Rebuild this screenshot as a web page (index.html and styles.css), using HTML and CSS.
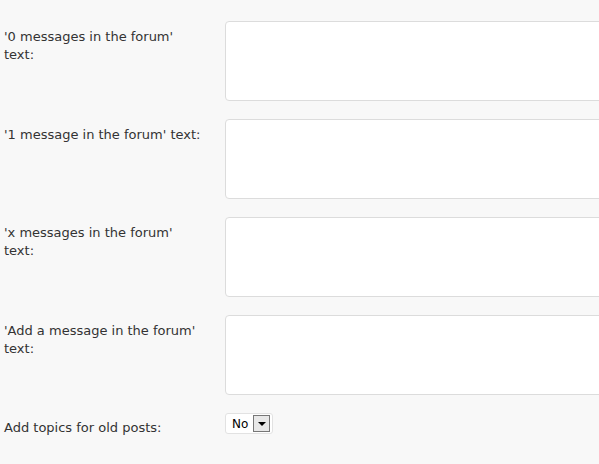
FILE: index.html
```html
<!DOCTYPE html>
<html lang="en">
<head>
    <meta charset="UTF-8">
    <title>Forum settings</title>
    <link rel="stylesheet" href="styles.css">
</head>
<body>
    <form class="settings">
        <div class="row">
            <label for="txt0">'0 messages in the forum' text:</label>
            <textarea id="txt0"></textarea>
        </div>
        <div class="row">
            <label for="txt1">'1 message in the forum' text:</label>
            <textarea id="txt1"></textarea>
        </div>
        <div class="row">
            <label for="txtx">'x messages in the forum' text:</label>
            <textarea id="txtx"></textarea>
        </div>
        <div class="row">
            <label for="txtadd">'Add a message in the forum' text:</label>
            <textarea id="txtadd"></textarea>
        </div>
        <div class="row row-select">
            <label for="oldposts">Add topics for old posts:</label>
            <div class="select-box">
                <span class="select-value">No</span>
                <span class="select-btn"></span>
            </div>
        </div>
    </form>
</body>
</html>
```

FILE: styles.css
```css
body {
    margin: 0;
    background-color: #f8f8f8;
    font-family: Verdana, "DejaVu Sans", sans-serif;
    font-size: 13px;
    color: #333;
    overflow: hidden;
}
.settings {
    padding-top: 21px;
}
.row {
    display: flex;
    align-items: flex-start;
    margin-bottom: 18px;
    overflow: hidden;
}
.row label {
    flex: 0 0 225px;
    box-sizing: border-box;
    padding: 7px 21px 0 4px;
    line-height: 18px;
}
.row textarea {
    flex: 0 0 400px;
    height: 80px;
    margin: 0;
    box-sizing: border-box;
    border: 1px solid #dcdcdc;
    border-radius: 4px;
    background-color: #fff;
    resize: none;
}
.row-select {
    padding-bottom: 2px;
}
.row-select label {
    padding-top: 6px;
}
.select-box {
    display: flex;
    align-items: center;
    margin-top: 0;
    height: 21px;
    padding: 0 2px 0 6px;
    box-sizing: border-box;
    border: 1px solid #e2e2e2;
    border-radius: 3px;
    background-color: #fff;
    font-family: Tahoma, "DejaVu Sans", sans-serif;
    font-size: 12px;
    color: #000;
}
.select-value {
    margin-right: 5px;
}
.select-btn {
    position: relative;
    width: 15px;
    height: 15px;
    border: 1px solid #777;
    background-color: #e8e8e8;
}
.select-btn::after {
    content: "";
    position: absolute;
    left: 4px;
    top: 6px;
    border-left: 4px solid transparent;
    border-right: 4px solid transparent;
    border-top: 4px solid #000;
}
```
